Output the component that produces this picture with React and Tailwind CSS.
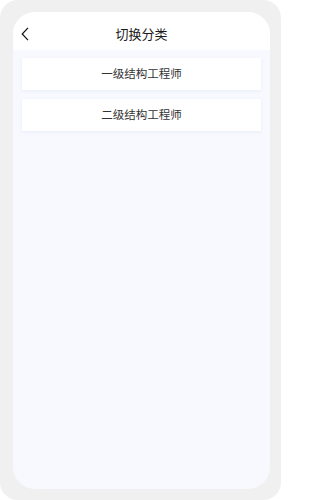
const items = ['一级结构工程师', '二级结构工程师'];

export default function App() {
  return (
    <div className="w-[281px] h-[500px] bg-white font-['Noto_Sans_CJK_SC','Noto_Sans',sans-serif]">
      <div className="h-full bg-[#f0f0f0] rounded-[18px] pt-[12px] pl-[13px] pr-[11px] pb-[11px]">
        <div className="h-full bg-[#f8f9fe] rounded-[22px] overflow-hidden flex flex-col">
          {/* header */}
          <div className="relative h-[38px] bg-white flex items-center justify-center shrink-0">
            <svg
              className="absolute left-[8px] top-[15px]"
              width="8"
              height="14"
              viewBox="0 0 8 14"
              fill="none"
              stroke="#111"
              strokeWidth="1.2"
            >
              <path d="M7 0.8 L1.2 7 L7 13.2" />
            </svg>
            <span className="text-[13px] text-[#1a1a1a] leading-none mt-[4px]">切换分类</span>
          </div>

          {/* list */}
          <div className="flex flex-col gap-[9px] pt-[8px] pl-[9px] pr-[9px]">
            {items.map((name) => (
              <div
                key={name}
                className="h-[32px] bg-white flex items-center justify-center shadow-[0_1px_3px_rgba(205,220,242,0.4)]"
              >
                <span className="text-[11.5px] text-[#333] leading-none">{name}</span>
              </div>
            ))}
          </div>
        </div>
      </div>
    </div>
  );
}
